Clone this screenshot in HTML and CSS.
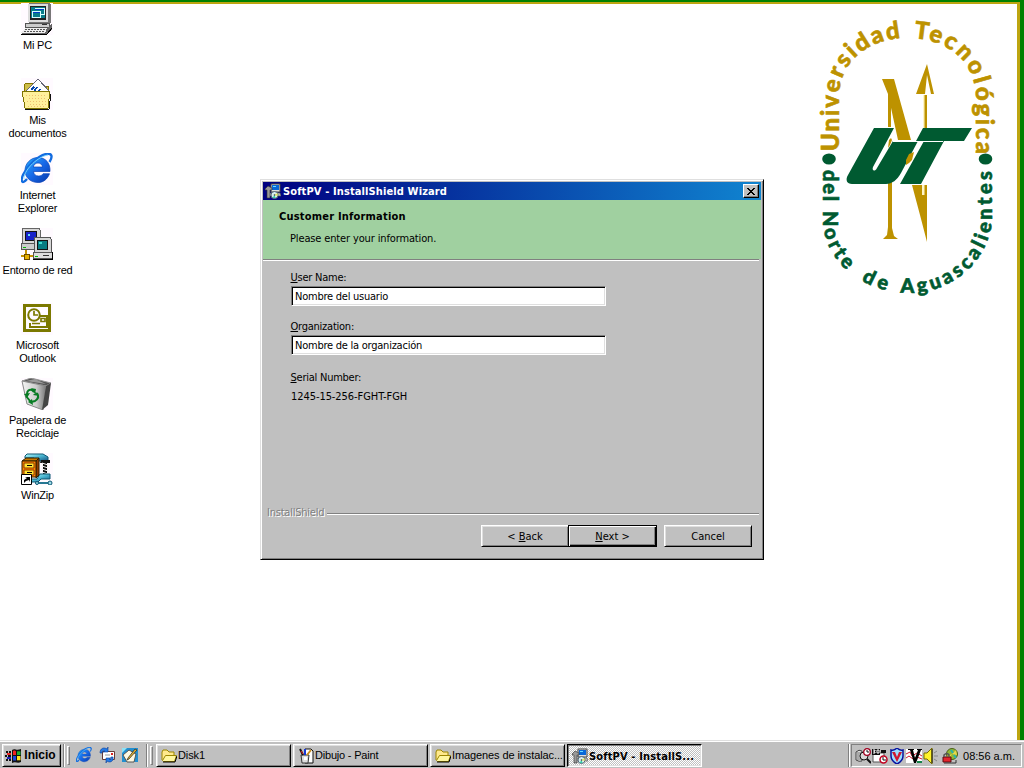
FILE: index.html
```html
<!DOCTYPE html>
<html lang="es">
<head>
<meta charset="utf-8">
<title>SoftPV - InstallShield Wizard</title>
<link rel="stylesheet" href="styles.css">
</head>
<body>
<svg width="0" height="0" class="defs" aria-hidden="true">
  <defs>
    <linearGradient id="steel" x1="0" x2="1" y1="0" y2="1"><stop offset="0" stop-color="#bff"/><stop offset=".5" stop-color="#48b4d0"/><stop offset="1" stop-color="#145080"/></linearGradient>
    <linearGradient id="bin" x1="0" x2="1"><stop offset="0" stop-color="#f4f4f4"/><stop offset=".6" stop-color="#ccc"/><stop offset="1" stop-color="#777"/></linearGradient>
    <linearGradient id="blue" x1="0" x2="1" y1="0" y2="1"><stop offset="0" stop-color="#29b0ff"/><stop offset=".5" stop-color="#1768e8"/><stop offset="1" stop-color="#0636a8"/></linearGradient>
    <symbol id="folder" viewBox="0 0 16 16">
      <path d="M1 12V4l1-2h4l2 2h5v3" fill="#ffe98c" stroke="#9b8500"/>
      <path d="M1.500 12.500 4.500 7.500h11l-2 6h-11z" fill="#fff7a0" stroke="#9b8500"/>
      <path d="M2 14h12l2-6" fill="none" stroke="#000"/>
    </symbol>
    <symbol id="ie" viewBox="0 0 32 32">
      <path d="M29 18.500H12.500c.4 3 2.100 4.500 5 4.500 2.200 0 3.700-.8 4.600-2.300h6.400c-2 5.500-6.200 8.800-11.400 8.800C9.500 29.500 4 24.500 4 17.500S9.700 4.500 17 4.500c7.800 0 12.500 5.800 12 14zM21.600 14c-.5-2.500-2.200-4-4.600-4-2.500 0-4.100 1.500-4.700 4z" fill="url(#blue)" stroke="#0844b8" stroke-width=".7"/>
      <path d="M6 26C1 32-1 28 2.500 21 7 12 17 3 25 1c6-1.200 7 2.500 3.500 8" fill="none" stroke="#126de0" stroke-width="2.400"/>
      <path d="M3 26C2 19 15 4 27 2" fill="none" stroke="#80dfff" stroke-width=".9"/>
    </symbol>
    <symbol id="setup" viewBox="0 0 16 16">
      <path d="M6 1h9v8H6z" fill="#ddd" stroke="#444"/><path d="M7 2h7v5H7z" fill="#0868d8"/><path d="M8 3h3v1H8z" fill="#68ddff"/>
      <path d="M4 10h11l1 3H4z" fill="#bbb" stroke="#555" stroke-width=".6"/>
      <path d="M0 6l3-3 4 2v2H5v8H2V7H0z" fill="#999" stroke="#333" stroke-width=".6"/>
      <circle cx="9.500" cy="12" r="3.500" fill="#d8eef0" stroke="#567"/><path d="M9.500 12l3-2v3z" fill="#ee5"/><path d="M9.500 12l-2 3h3z" fill="#3ca"/><circle cx="9.500" cy="12" r=".8" fill="#333"/>
    </symbol>
  </defs>
</svg>

<main class="desktop">
  <section class="shortcuts">
    <div class="shortcut">
      <svg class="pic" viewBox="0 0 32 32" shape-rendering="crispEdges">
        <path d="M7 1l2-1h19l2 2v18H8z" fill="#777"/><path d="M7 1h20v18H7z" fill="#ddd"/><path d="M9 3h16v14H9z" fill="#222"/><path d="M10 4h14v11H10z" fill="#087e8a"/>
        <path d="M14 5h9v2h-9zM11 8h8v2h-8z" fill="#003cc8"/><path d="M14 5h9v6h-4M11 8h8v6h-8z" fill="none" stroke="#d8ffff"/>
        <path d="M4 20h24v4H4z" fill="#ccc" stroke="#555"/><path d="M21 21h5v1h-5z" fill="#333"/><path d="M5 25h22l4-5v6l-4 5H1v-2z" fill="#666"/><path d="M4 25h22l-2 5H0z" fill="#eee"/>
        <path d="M4 26.500h20M3 28.500h20" stroke="#555" stroke-dasharray="2 1"/><path d="M0 31h26l5-6" fill="none" stroke="#000"/>
      </svg>
      <span class="label">Mi PC</span>
    </div>
    <div class="shortcut">
      <svg class="pic" viewBox="0 0 32 32" shape-rendering="crispEdges">
        <path d="M3 13V7l2-2h7l3 3h12v6" fill="#cebd4a" stroke="#877500"/>
        <path d="M5 13 17 1l12 13-7 8z" fill="#fff" stroke="#667"/><path d="M10 12l3-3m-1 6 4-6m0 6 3-4m1 6 2-4m1 5 2-3" stroke="#0646ad" stroke-width="1.500"/>
        <path d="M1 13h28l-2 17H4z" fill="#fff09c" stroke="#7f7300"/><path d="M5 17h20M8 20h18M6 23h20M9 26h17M7 28h18" stroke="#eebf72" stroke-dasharray="1 2"/>
        <path d="M4 31h24l2-15" fill="none" stroke="#111"/>
      </svg>
      <span class="label">Mis<br>documentos</span>
    </div>
    <div class="shortcut">
      <svg class="pic" viewBox="0 0 32 32"><use href="#ie"/></svg>
      <span class="label">Internet<br>Explorer</span>
    </div>
    <div class="shortcut">
      <svg class="pic" viewBox="0 0 32 32" shape-rendering="crispEdges">
        <path d="M1 1l2-1h15l1 2v13H1z" fill="#d6d6d6" stroke="#666"/><path d="M4 3h12v10H4z" fill="#111"/><path d="M5 4h10v8H5z" fill="#1622c8"/><path d="M7 6h2v2H7z" fill="#6df"/>
        <path d="M0 15h20v6H0z" fill="#ccc" stroke="#555"/><path d="M2 19h3v1H2z" fill="#0b0"/><path d="M5 22v6m-5 0h13" stroke="#c69300" stroke-width="2"/><path d="M3 26h5v5H3z" fill="#e7b000" stroke="#6c4b00"/>
        <path d="M13 10l2-1h14l1 2v13H13z" fill="#d6d6d6" stroke="#555"/><path d="M16 12h11v10H16z" fill="#111"/><path d="M17 13h9v8h-9z" fill="#067c82"/><path d="M18 14h3v2h-3z" fill="#40dcd0"/>
        <path d="M12 24h17l2 1v5H12z" fill="#ddd" stroke="#555"/><path d="M14 28h3v1h-3z" fill="#0b0"/><path d="M22 27h6v1h-6z" fill="#333"/><path d="M12 31h19v-7" fill="none" stroke="#000"/>
      </svg>
      <span class="label">Entorno de red</span>
    </div>
    <div class="shortcut">
      <svg class="pic" viewBox="0 0 32 32" fill="none" stroke="#7b7900">
        <path d="M3.500 2.500h25v25h-25z" stroke-width="3" fill="#fffbff"/><path d="M17 13h9v11H9v-4" stroke-width="2"/><circle cx="13" cy="12" r="5.800" fill="#fffbff" stroke-width="2"/><path d="M13 8v4h4M11 20.500h8M20 15.500h4v3h-4z" stroke-width="1.700"/>
      </svg>
      <span class="label">Microsoft<br>Outlook</span>
    </div>
    <div class="shortcut">
      <svg class="pic" viewBox="0 0 32 32">
        <path d="M1 3 10 0l20 5-5 3z" fill="#555" stroke="#999"/><path d="M5 3l9-2 11 5z" fill="#999"/><path d="M1 3l24 5-3 24-16-6z" fill="url(#bin)" stroke="#888"/><path d="M25 8l5-3-3 22-6 5z" fill="#444"/>
        <g fill="none" stroke="#087b24" stroke-width="2"><path d="M6 16c0-3 2-5 5-4l2 2M16 15c2 3 1 6-2 8l-4 1M5 18l4 5"/></g><path d="M10 10l5 1-1 5zM18 18l-3-4-3 3zM11 21l-4 3 5 3zM3 16l6-1-3 5z" fill="#087b24"/>
      </svg>
      <span class="label">Papelera de<br>Reciclaje</span>
    </div>
    <div class="shortcut">
      <svg class="pic" viewBox="0 0 32 32">
        <path d="M4 3l2-2h16l5 3v4H15L13 5H4z" fill="url(#steel)" stroke="#0c5873"/><path d="M20 7h9v3h-3v11h-4V10h-3z" fill="#111"/><path d="M21 10l6 2m-6 1 6 2m-6 1 6 2m-6 1 6 2" stroke="#efefef"/>
        <path d="M19 21h10v5h-9l-3 3h-7v-3h6z" fill="url(#steel)" stroke="#0c5873"/><path d="M16 30h13" stroke="#267892" stroke-width="2"/><circle cx="29" cy="30" r="2" fill="#9ddbe8" stroke="#0c5873"/><circle cx="16" cy="30" r="1.500" fill="#9ddbe8" stroke="#0c5873"/>
        <path d="M1 8l4-3h13l-3 3z" fill="#c97800" stroke="#302000"/><path d="M15 8l3-3v17l-3 3z" fill="#903c00" stroke="#302000"/><path d="M1 8h14v16H1z" fill="#ff8200" stroke="#302000"/><path d="M3 10h10v5H3zM3 17h10v5H3z" fill="#ffe333" stroke="#8b3b00"/><path d="M6 12h5v1H6zM6 19h5v1H6z" fill="#000"/>
        <path d="M.5 21.500h10v10H.5z" fill="#fff" stroke="#000"/><path d="M3 30v-3l3-2-2-1h5v5l-1-2-3 1z" fill="#000"/>
      </svg>
      <span class="label">WinZip</span>
    </div>
  </section>

  <svg class="emblem" viewBox="810 10 200 300">
    <path id="upper" d="M839 151V98C839 61 869 38 908 38S976 62 976 98V152" fill="none"/>
    <path id="lower" d="M823 168V223C826 264 865 293 909 293S990 260 992 219V166" fill="none"/>
    <g class="ring gold"><text><textPath href="#upper" startOffset="0" textLength="148">Universidad</textPath></text><text><textPath href="#upper" startOffset="161" textLength="152">Tecnológica</textPath></text></g>
    <g class="ring green"><text><textPath href="#lower" startOffset="2" textLength="31">del</textPath></text><text><textPath href="#lower" startOffset="43" textLength="66">Norte</textPath></text><text><textPath href="#lower" startOffset="127" textLength="27">de</textPath></text><text><textPath href="#lower" startOffset="168" textLength="179">Aguascalientes</textPath></text></g>
    <g fill="#bd9200">
      <path d="M882 79h12l17 61h-13l-10-46z"/><path d="M888 94h3v33h-3zM924 95h3v33h-3z"/>
      <path d="M927 64l7 30h-3l-4-19-2 19h-9z"/><path d="M888 180h4v48l2 8 4 3h-15l4-4 1-8z"/><path d="M912 185h15v57l-7-27z"/>
    </g>
    <path d="M923 95h1.500v33H923zM922 185h2.500v10H922z" fill="#fff5c8"/>
    <g fill="#005a31">
      <path d="M874 128h20l-21 39c-1.500 4 2 5 4 1l16-27h25l-17 32c-4 7-9 11-15 11h-34c-5 0-7-4-4-9z"/>
      <path d="M923 128h49l-8 13h-20l-23 43h-21l24-43h-8z"/>
    </g>
    <path d="M893 141.500h50" stroke="#fff"/>
    <path d="M906 165v-5l3-6 5-2-2 8-3 3zM888 148l1-8 2-2 1 2-2 5z" fill="#bd9200"/>
    <ellipse cx="829" cy="159" rx="6.800" ry="5.500" fill="#005a31"/><ellipse cx="985.500" cy="159" rx="6.800" ry="5.500" fill="#005a31"/>
  </svg>

  <section class="window">
    <header class="titlebar">
      <svg class="mini" viewBox="0 0 16 16"><use href="#setup"/></svg>
      <span class="title">SoftPV - InstallShield Wizard</span>
      <button class="close" aria-label="Close"><svg width="8" height="7" viewBox="0 0 8 7" shape-rendering="crispEdges"><path d="M0 0h2v1h1v1h2V1h1V0h2v1H7v1H6v1H5v1h1v1h1v1h1v1H6V6H5V5H3v1H2v1H0V6h1V5h1V4h1V3H2V2H1V1H0z"/></svg></button>
    </header>
    <div class="banner"><h1>Customer Information</h1><p>Please enter your information.</p></div>
    <hr class="groove">
    <form class="fields">
      <label><u>U</u>ser Name:</label>
      <div class="input">Nombre del usuario</div>
      <label><u>O</u>rganization:</label>
      <div class="input v2">Nombre de la organización</div>
      <label><u>S</u>erial Number:</label>
      <div class="serial">1245-15-256-FGHT-FGH</div>
    </form>
    <div class="brand"><span>InstallShield</span><hr class="groove"></div>
    <footer class="actions">
      <button class="push"><span>&lt; <u>B</u>ack</span></button><button class="push default"><span><u>N</u>ext &gt;</span></button><button class="push cancel">Cancel</button>
    </footer>
  </section>
</main>

<nav class="taskbar">
  <button class="start"><svg width="18" height="16" viewBox="0 0 18 16"><path d="M7 2c3-2 4 1 9-1v13c-4 2-5-1-9 1z" fill="#111"/><path d="M8 3c2-1 2 0 3 .3V7H8z" fill="#f02020"/><path d="M12 3.300h3.500V7H12z" fill="#1bad32"/><path d="M8 8h3v4.500H8z" fill="#1b44dc"/><path d="M12 8h3.500v4.300H12z" fill="#ffe020"/><path d="M1 4h2m1 0h2M0 8h2m1 0h3M1 12h2m1 0h2" stroke="#111" stroke-width="2"/><path d="M2 6h4" stroke="#e22" stroke-width="2"/><path d="M2 10h4" stroke="#22b" stroke-width="2"/></svg><span>Inicio</span></button>
  <i class="divider"></i><i class="grip"></i>
  <div class="quick">
    <svg class="mini" viewBox="0 0 32 32"><use href="#ie"/></svg>
    <svg class="mini" viewBox="0 0 16 16"><path d="M3.500 4.500h12v8h-12z" fill="#fff" stroke="#653b38"/><path d="M12 6h2v2h-2z" fill="#d22"/><path d="M6 8h5" stroke="#999"/><path d="M1 6c0-5 4-6 7-4l1-2v5H4l2-1C4 3 3 4 3 6zM14 10c1 5-4 6-6 4l-1 2v-5h5l-2 1c2 1 3 0 2-2z" fill="#237be8" stroke="#083c99" stroke-width=".6"/></svg>
    <svg class="mini" viewBox="0 0 16 16"><path d="M0 1h16v14H0z" fill="#228fd0"/><path d="M1 8l6-5 7 4-2 8H5z" fill="#fff9e2" stroke="#555"/><path d="M6 11l7-9 2 1-8 9-2 1z" fill="#e2b12e" stroke="#222" stroke-width=".7"/><path d="M0 1h5L0 6z" fill="#8de1f5"/></svg>
  </div>
  <i class="divider second"></i><i class="grip"></i>
  <div class="tasks">
    <button class="task"><svg class="mini" viewBox="0 0 16 16"><use href="#folder"/></svg><span>Disk1</span></button>
    <button class="task paint"><svg class="mini" viewBox="0 0 16 16"><path d="M7 1h6l2 2v12H7z" fill="#fff" stroke="#111"/><path d="M3 7h8l-1 8H4z" fill="#ddd" stroke="#333"/><path d="M5 7 2 1" stroke="#111" stroke-width="2"/><path d="M7 7V1" stroke="#1738d8" stroke-width="2"/><path d="M9 7l4-5" stroke="#c98c1c" stroke-width="2"/><path d="M3 3l2 3" stroke="#e22"/><path d="M6 9h3v3H6z" fill="#fff"/></svg><span>Dibujo - Paint</span></button>
    <button class="task"><svg class="mini" viewBox="0 0 16 16"><use href="#folder"/></svg><span>Imagenes de instalac...</span></button>
    <button class="task active"><svg class="mini" viewBox="0 0 16 16"><use href="#setup"/></svg><span>SoftPV - InstallS...</span></button>
  </div>
  <i class="divider traydiv"></i>
  <div class="tray">
    <svg class="mini" viewBox="0 0 16 16"><path d="M1 4q3-3 6-1v10q-3 1-6-1z" fill="#ddd" stroke="#444"/><path d="M3 4v8m2-8v8" stroke="#777"/><circle cx="9" cy="8" r="4" fill="#d8d8d8" stroke="#111"/><path d="m12 11 4 4" stroke="#111" stroke-width="2"/><circle cx="12" cy="4" r="3.300" fill="#fff" stroke="#a00020" stroke-width="1.300"/><path d="M12 2v2h2" fill="none" stroke="#111"/></svg>
    <svg class="mini" viewBox="0 0 16 16"><path d="M1 5h11v9H1z" fill="#fff" stroke="#555"/><path d="M0 1h8v6H0z" fill="#111"/><path d="M1 2h2v1H2v1h1v1H1m4-3h2v3H5z" fill="none" stroke="#fff"/><path d="M9 2h5v3H9z" fill="#111"/><circle cx="11.500" cy="11.500" r="3.500" fill="#fff" stroke="#c00020" stroke-width="1.500"/><path d="M11 9v3h3" fill="none" stroke="#111"/></svg>
    <svg class="mini" viewBox="0 0 16 16"><path d="M2 2q3 1 6-2 3 3 6 2v6q0 5-6 8-6-3-6-8z" fill="#9bdcff" stroke="#0712a0" stroke-width="1.500"/><path d="M3 4h3l2 5 2-5h3L8 14z" fill="#d01830"/></svg>
    <svg class="mini" viewBox="0 0 16 16"><path d="M0 1h16v14H0z" fill="#fff"/><path d="M0 6l4-2 2 4 5-3 5 3M0 10l3-2 4 3 4-2 5 2" fill="none" stroke="#d01830"/><path d="M2 1h6v1H7l2 8 3-8h-1V1h5v1h-1l-5 13H8L4 2H2z" fill="#000"/><path d="M11 13h5v2h-5z" fill="#16854a"/></svg>
    <svg class="mini" viewBox="0 0 16 16"><path d="M1 5h3l5-5v16l-5-5H1z" fill="#fff329" stroke="#776c00"/><path d="M9 1v14" stroke="#111"/><path d="M11 5l3-2m-3 5h4m-4 3 3 2" stroke="#888"/></svg>
    <svg class="mini globe" viewBox="0 0 16 16"><circle cx="10" cy="6" r="5.500" fill="#92b737" stroke="#4b6115"/><path d="M10 6l4-4 1 5zM10 6l-5 2 2 3z" fill="#e6d74b"/><path d="M9 2l2 3m1 2 2 3" stroke="#28b4aa" stroke-width="2"/><path d="M1 9h8v5H1z" fill="#e3262e" stroke="#610b10"/><path d="M2 9V7q3-3 5 0v2" fill="none" stroke="#555" stroke-width="1.500"/><path d="M2 15h12v-3" fill="none" stroke="#333"/></svg>
    <time>08:56 a.m.</time>
  </div>
</nav>
</body>
</html>
```
FILE: styles.css
```css
* { box-sizing: border-box; }
html, body { margin: 0; width: 1024px; height: 768px; overflow: hidden; }
body { display: flex; flex-direction: column; background: #fff; color: #000; font: 11px/13px "DejaVu Sans Condensed", "DejaVu Sans", sans-serif; font-stretch: condensed; }
.defs { position: absolute; }
button { margin: 0; padding: 0; border: 0; border-radius: 0; color: #000; font: inherit; background: #c0c0c0; display: flex; align-items: center; justify-content: center; }
u { text-underline-offset: 1px; text-decoration-thickness: 1px; }
span, time, p, h1, label { white-space: nowrap; }

.desktop { position: relative; height: 740px; flex: none; border-top: 2px solid #008000; border-right: 4px solid #008000; }
.desktop::before { content: ""; position: absolute; inset: 0; border-top: 2px solid #bda510; border-right: 3px solid #bda510; }

.shortcuts { position: relative; display: grid; grid-auto-rows: 75px; width: 74px; padding-top: 1px; }
.shortcut { display: flex; flex-direction: column; align-items: center; }
.pic { width: 32px; height: 32px; background: #fffaff; flex: none; margin-bottom: 4px; }
.label { font: 11px/13px "Liberation Sans", Arial, sans-serif; letter-spacing: -.2px; text-align: center; padding-left: 1px; }

.emblem { position: absolute; left: 810px; top: 8px; width: 200px; height: 300px; }
.ring { font-family: Lato, "Open Sans", sans-serif; font-weight: 900; stroke-width: .6px; }
.gold { fill: #bd9200; stroke: #bd9200; font-size: 24px; }
.green { fill: #005a31; stroke: #005a31; font-size: 20px; }

.window { position: absolute; left: 260px; top: 177px; width: 504px; height: 381px; padding: 1px; background: #c0c0c0; border: 1px solid; border-color: #dfdfdf #000 #000 #dfdfdf; box-shadow: inset 1px 1px #fff, inset -1px -1px #808080; display: flex; flex-direction: column; }
.titlebar { height: 18px; margin: 1px 1px 0; display: flex; align-items: center; padding: 0 2px; background: linear-gradient(90deg, #000080, #1084d0); color: #fff; }
.mini { width: 16px; height: 16px; flex: none; }
.title { margin-left: 2px; font-weight: bold; flex: 1; letter-spacing: .12px; }
.close { width: 16px; height: 14px; border: 1px solid; border-color: #fff #000 #000 #fff; box-shadow: inset -1px -1px #808080; }
.banner { height: 59px; margin: 0 1px; padding: 10px 16px; background: #a0d0a0; }
.banner h1 { margin: 0; font: inherit; font-weight: bold; letter-spacing: .2px; }
.banner p { margin: 9px 0 0 11px; letter-spacing: -.14px; }
.groove { border: 0; border-top: 1px solid #808080; border-bottom: 1px solid #fff; height: 2px; margin: 0; }
.window > .groove { margin: 0 3px 0 1px; flex: none; }
.fields { margin: 10px 0 0 28px; height: 235px; display: flex; flex-direction: column; align-items: flex-start; letter-spacing: -.24px; }
.fields label { padding-left: .5px; }
.input { width: 315px; height: 20px; margin: 2px 0 14px 1px; padding: 3px 2px 1px 3px; background: #fff; border: 1px solid; border-color: #808080 #fff #fff #808080; box-shadow: inset 1px 1px #000, inset -1px -1px #dfdfdf; }
.input.v2 { margin-bottom: 16px; }
.serial { margin: 6px 0 0 1px; letter-spacing: -.07px; }
.brand { display: flex; align-items: center; margin: 0 3px 0 5px; height: 13px; color: #808080; text-shadow: 1px 1px #fff; letter-spacing: -.23px; }
.brand .groove { flex: 1; margin: 3px 0 0 3px; }
.actions { display: flex; justify-content: flex-end; margin: 6px 10px 0 0; letter-spacing: -.1px; }
.push { width: 88px; height: 22px; border: 1px solid; border-color: #fff #000 #000 #fff; box-shadow: inset 1px 1px #dfdfdf, inset -1px -1px #808080; }
.default { border-color: #000; box-shadow: inset 1px 1px #fff, inset -1px -1px #000, inset -2px -2px #808080; width: 89px; margin-left: -1px; }
.cancel { margin-left: 7px; }

.taskbar { height: 28px; display: flex; align-items: flex-start; padding: 1px 2px 0; background: #c0c0c0; border-top: 1px solid #dfdfdf; box-shadow: inset 0 1px #fff; }
.taskbar > * { margin-top: 2px; }
.start, .task { height: 23px; border: 1px solid; border-color: #fff #000 #000 #fff; box-shadow: inset 1px 1px #dfdfdf, inset -1px -1px #808080; font-family: "Liberation Sans", Arial, sans-serif; flex: none; }
.start { width: 59px; font-weight: bold; font-size: 12px; gap: 1px; padding-right: 2px; }
.divider { width: 2px; height: 23px; margin-left: 2px; border-left: 1px solid #808080; border-right: 1px solid #fff; flex: none; }
.grip { width: 3px; height: 19px; margin: 4px 0 0 2px !important; border: 1px solid; border-color: #fff #808080 #808080 #fff; flex: none; }
.quick { display: flex; gap: 7px; margin-left: 6px; padding-top: 3px; }
.divider.second { margin-left: 8px; }
.tasks { display: flex; gap: 2px; margin-left: 3px; }
.task { width: 135px; padding-left: 4px; justify-content: flex-start; gap: 1px; letter-spacing: -.1px; }
.paint { letter-spacing: -.2px; }
.active { border-color: #000 #fff #fff #000; box-shadow: inset 1px 1px #808080, inset -1px -1px #dfdfdf; font-family: "DejaVu Sans Condensed", "DejaVu Sans", sans-serif; font-weight: bold; background: repeating-conic-gradient(#fff 0 25%, #c0c0c0 0 50%) 0 0 / 2px 2px; padding-top: 1px; letter-spacing: .15px; }
.traydiv { margin-left: auto; }
.tray { width: 171px; height: 23px; margin-left: 1px; padding: 0 6px 0 3px; border: 1px solid; border-color: #808080 #fff #fff #808080; display: flex; align-items: center; gap: 1px; font-family: "Liberation Sans", Arial, sans-serif; }
.globe { margin-left: 2px; }
.tray time { margin-left: auto; padding-top: 1px; }
```
